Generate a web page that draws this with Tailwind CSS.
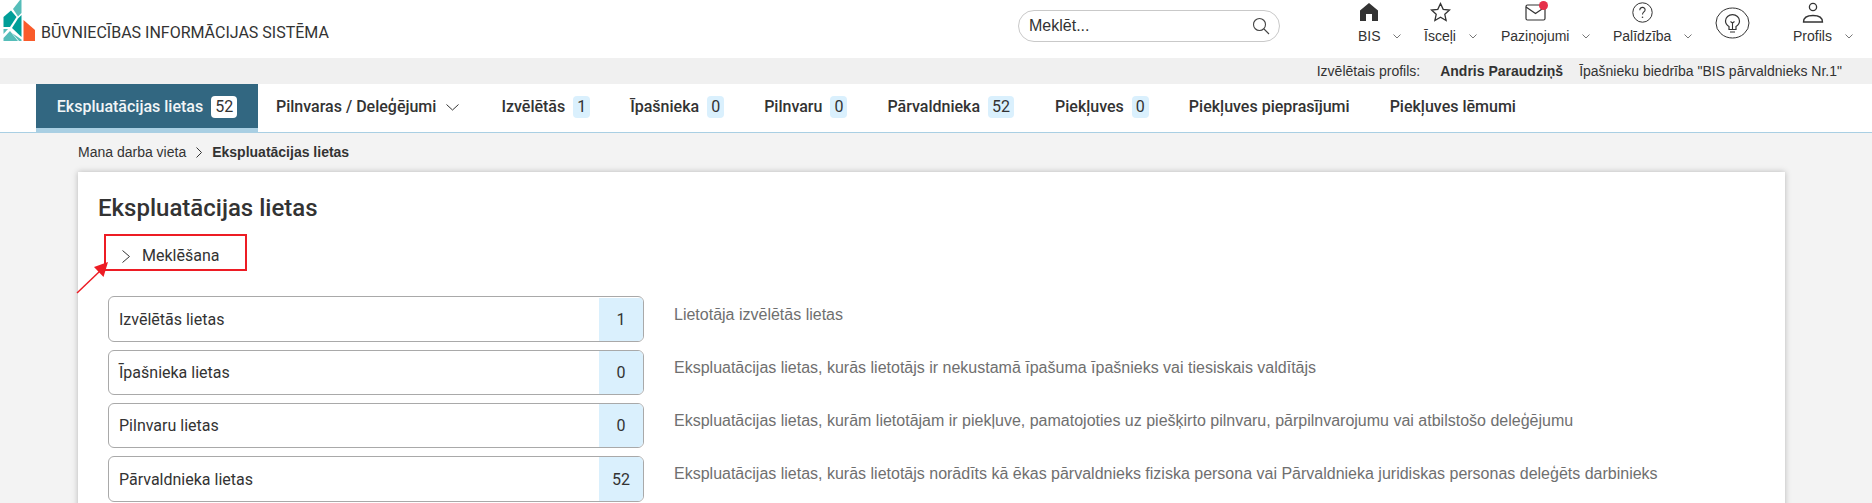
<!DOCTYPE html>
<html lang="lv">
<head>
<meta charset="utf-8">
<script src="https://cdn.jsdelivr.net/npm/@tailwindcss/browser@4"></script>
</head>
<body class="h-[503px] overflow-hidden bg-[#f3f3f3] font-['Roboto',sans-serif] text-[#333]">
<header class="h-[58px] bg-white flex relative">
  <div class="w-[1018px] flex items-start shrink-0">
    <svg class="w-[36px] h-[42px] shrink-0" viewBox="0 0 36 42">
      <path d="M13 9 20 0h1.500v13L18 16.500z" fill="#55bdb9"/>
      <path d="M11 10.500 16.500 17 10 27H3.500V17z" fill="#009e98"/>
      <path d="M18 18.500l3.500-3.500v22L12 28z" fill="#009e98"/>
      <path d="M3.500 29H8l-4.500 5z" fill="#55bdb9"/>
      <path d="M3.500 38l6.500-7 8 10H3.500z" fill="#55bdb9"/>
      <path d="M12 33l9.500 6.500V41H19z" fill="#55bdb9"/>
      <path d="M23.500 20 35 30v11H23.500z" fill="#f95b2b"/>
    </svg>
    <span class="ml-[5px] mt-[23px] text-[16px] leading-5 text-[#333] font-normal whitespace-nowrap">BŪVNIECĪBAS INFORMĀCIJAS SISTĒMA</span>
  </div>
  <div class="w-[262px] h-[32px] mt-[10px] border border-[#c9c9c9] rounded-2xl flex items-center justify-between pl-[10px] pr-[9px] font-['Liberation_Sans',sans-serif] text-[16px] text-[#333] shrink-0">
    <span>Meklēt...</span>
    <svg class="w-[18px] h-[18px]" viewBox="0 0 18 18" fill="none" stroke="#444" stroke-width="1.100"><circle cx="7.500" cy="7.500" r="6"/><path d="M12 12l5 5"/></svg>
  </div>
  <nav class="font-['Liberation_Sans',sans-serif] text-[14px] text-[#333] relative flex-1">
    <div class="absolute left-[78px] top-0 h-[58px]">
      <svg class="absolute left-[1px] top-[2px] w-[20px] h-[20px]" viewBox="0 0 20 20"><path d="M1 19V8.500L10 1l9 7.500V19h-6v-7H7v7z" fill="#333"/></svg>
      <span class="absolute left-0 top-[26px] whitespace-nowrap">BIS</span>
      <svg class="absolute left-[35px] top-[34px] w-[8px] h-[5px]" viewBox="0 0 8 5" fill="none" stroke="#777"><path d="M.5.5 4 4 7.500.5"/></svg>
    </div>
    <div class="absolute left-[144px] top-0 h-[58px]">
      <svg class="absolute left-[6px] top-[2px] w-[21px] h-[20px]" viewBox="0 0 21 20" fill="none" stroke="#333" stroke-width="1.300"><path d="M10.500 1.500l2.700 5.800 6.300.7-4.700 4.300 1.300 6.200-5.600-3.200-5.600 3.200 1.300-6.200L1.500 8l6.300-.7z"/></svg>
      <span class="absolute left-0 top-[26px] whitespace-nowrap">Īsceļi</span>
      <svg class="absolute left-[45px] top-[34px] w-[8px] h-[5px]" viewBox="0 0 8 5" fill="none" stroke="#777"><path d="M.5.5 4 4 7.500.5"/></svg>
    </div>
    <div class="absolute left-[221px] top-0 h-[58px]">
      <svg class="absolute left-[24px] top-[1px] w-[24px] h-[20px]" viewBox="0 0 24 20" fill="none" stroke="#333" stroke-width="1.200"><rect x="1" y="4" width="19" height="15" rx="1.500"/><path d="M1 6l9.500 6.500L20 6"/><circle cx="18.500" cy="4.500" r="4.500" fill="#e6304a" stroke="none"/></svg>
      <span class="absolute left-0 top-[26px] whitespace-nowrap">Paziņojumi</span>
      <svg class="absolute left-[81px] top-[34px] w-[8px] h-[5px]" viewBox="0 0 8 5" fill="none" stroke="#777"><path d="M.5.5 4 4 7.500.5"/></svg>
    </div>
    <div class="absolute left-[333px] top-0 h-[58px]">
      <svg class="absolute left-[19px] top-[2px] w-[21px] h-[21px]" viewBox="0 0 21 21" fill="none" stroke="#333"><circle cx="10.500" cy="10.500" r="9.700"/><path d="M7.800 8.200c0-4 5.600-3.500 5.300-.2-.2 2-2.600 2-2.600 4.500" stroke-width="1.100"/><circle cx="10.500" cy="15.200" r=".8" fill="#333" stroke="none"/></svg>
      <span class="absolute left-0 top-[26px] whitespace-nowrap">Palīdzība</span>
      <svg class="absolute left-[71px] top-[34px] w-[8px] h-[5px]" viewBox="0 0 8 5" fill="none" stroke="#777"><path d="M.5.5 4 4 7.500.5"/></svg>
    </div>
    <svg class="absolute left-[435px] top-[7px] w-[35px] h-[32px]" viewBox="0 0 35 32" fill="none" stroke="#333"><ellipse cx="17.500" cy="16" rx="16.500" ry="15"/><path d="M14 22.500v-3c-2-1.200-3.500-3-3.500-5.500 0-3.800 3.200-6.300 7-6.300s7 2.500 7 6.300c0 2.500-1.500 4.300-3.500 5.500v3z" stroke-width="1.200"/><path d="M15 25h5M17.500 22v-6l-2-1.500M17.500 16l2-1.500" stroke-width="1.100"/></svg>
    <div class="absolute left-[513px] top-0 h-[58px]">
      <svg class="absolute left-[9px] top-[2px] w-[22px] h-[21px]" viewBox="0 0 22 21" fill="none" stroke="#333" stroke-width="1.300"><circle cx="11" cy="5" r="3.600"/><path d="M1.500 20c0-4 3-6.500 9.500-6.500S20.500 16 20.500 20z"/></svg>
      <span class="absolute left-0 top-[26px] whitespace-nowrap">Profils</span>
      <svg class="absolute left-[52px] top-[34px] w-[8px] h-[5px]" viewBox="0 0 8 5" fill="none" stroke="#777"><path d="M.5.5 4 4 7.500.5"/></svg>
    </div>
  </nav>
</header>

<div class="h-[26px] bg-[#f0f0f0] flex items-center justify-end pr-[30px] font-['Liberation_Sans',sans-serif] text-[14px] text-[#333]">
  <span>Izvēlētais profils:</span>
  <span class="ml-[20px] font-bold">Andris Paraudziņš</span>
  <span class="ml-[16px]">Īpašnieku biedrība "BIS pārvaldnieks Nr.1"</span>
</div>

<nav class="h-[49px] bg-white border-b border-[#a9cfe3] flex items-start pl-[36px] text-[16px] font-medium text-[#333] whitespace-nowrap">
  <div class="w-[222px] h-[48px] pt-[2px] bg-[#326781] border-b-4 border-[#a9cfe3] flex items-center justify-center gap-[8px] text-[#f1f5f7]">
    <span>Ekspluatācijas lietas</span>
    <span class="h-[22px] w-[26px] bg-white rounded text-[#333] font-normal flex items-center justify-center">52</span>
  </div>
  <div class="h-[46px] ml-[18px] flex items-center"><span>Pilnvaras / Deleģējumi</span>
    <svg class="ml-[10px] w-[13px] h-[7px]" viewBox="0 0 13 7" fill="none" stroke="#333"><path d="M.5.5l6 5.500 6-5.500"/></svg></div>
  <div class="h-[46px] ml-[42px] flex items-center gap-[8px]"><span>Izvēlētās</span><span class="h-[22px] w-[17px] bg-[#daf0fd] rounded font-normal flex items-center justify-center">1</span></div>
  <div class="h-[46px] ml-[40px] flex items-center gap-[8px]"><span>Īpašnieka</span><span class="h-[22px] w-[17px] bg-[#daf0fd] rounded font-normal flex items-center justify-center">0</span></div>
  <div class="h-[46px] ml-[40px] flex items-center gap-[8px]"><span>Pilnvaru</span><span class="h-[22px] w-[17px] bg-[#daf0fd] rounded font-normal flex items-center justify-center">0</span></div>
  <div class="h-[46px] ml-[40px] flex items-center gap-[8px]"><span>Pārvaldnieka</span><span class="h-[22px] w-[26px] bg-[#daf0fd] rounded font-normal flex items-center justify-center">52</span></div>
  <div class="h-[46px] ml-[41px] flex items-center gap-[8px]"><span>Piekļuves</span><span class="h-[22px] w-[17px] bg-[#daf0fd] rounded font-normal flex items-center justify-center">0</span></div>
  <div class="h-[46px] ml-[40px] flex items-center"><span>Piekļuves pieprasījumi</span></div>
  <div class="h-[46px] ml-[40px] flex items-center"><span>Piekļuves lēmumi</span></div>
</nav>

<div class="h-[39px] pl-[78px] flex items-center font-['Liberation_Sans',sans-serif] text-[14px] text-[#333]">
  <span>Mana darba vieta</span>
  <svg class="mx-[10px] w-[6px] h-[11px]" viewBox="0 0 6 11" fill="none" stroke="#333"><path d="M.5.5l5 5-5 5"/></svg>
  <span class="font-bold">Ekspluatācijas lietas</span>
</div>

<main class="relative ml-[78px] w-[1707px] h-[340px] bg-white shadow-[0_0_6px_rgba(0,0,0,0.25)] pl-[20px] pt-[20px]">
  <h1 class="text-[24px] leading-[32px] font-medium text-[#333]">Ekspluatācijas lietas</h1>
  <div class="mt-[20px] ml-[24px] h-[24px] flex items-center text-[16px] text-[#333]">
    <svg class="w-[8px] h-[13px]" viewBox="0 0 8 13" fill="none" stroke="#333"><path d="M.5.5l7 6-7 6"/></svg>
    <span class="ml-[12px]">Meklēšana</span>
  </div>
  <div class="mt-[28px] ml-[10px] flex flex-col gap-[8px]">
    <div class="flex items-start">
      <div class="w-[536px] h-[46px] pt-[1px] border border-[#a9a9a9] rounded-md overflow-hidden flex items-stretch text-[16px] shrink-0"><span class="flex-1 pl-[10px] flex items-center">Izvēlētās lietas</span><span class="w-[44px] bg-[#daf0fd] flex items-center justify-center">1</span></div>
      <p class="ml-[30px] mt-[7px] font-['Liberation_Sans',sans-serif] text-[16px] leading-6 text-[#6f6f6f]">Lietotāja izvēlētās lietas</p>
    </div>
    <div class="flex items-start">
      <div class="w-[536px] h-[45px] border border-[#a9a9a9] rounded-md overflow-hidden flex items-stretch text-[16px] shrink-0"><span class="flex-1 pl-[10px] pt-[1px] flex items-center">Īpašnieka lietas</span><span class="w-[44px] pt-[1px] bg-[#daf0fd] flex items-center justify-center">0</span></div>
      <p class="ml-[30px] mt-[6px] font-['Liberation_Sans',sans-serif] text-[16px] leading-6 text-[#6f6f6f]">Ekspluatācijas lietas, kurās lietotājs ir nekustamā īpašuma īpašnieks vai tiesiskais valdītājs</p>
    </div>
    <div class="flex items-start">
      <div class="w-[536px] h-[45px] border border-[#a9a9a9] rounded-md overflow-hidden flex items-stretch text-[16px] shrink-0"><span class="flex-1 pl-[10px] pt-[1px] flex items-center">Pilnvaru lietas</span><span class="w-[44px] pt-[1px] bg-[#daf0fd] flex items-center justify-center">0</span></div>
      <p class="ml-[30px] mt-[6px] font-['Liberation_Sans',sans-serif] text-[16px] leading-6 text-[#6f6f6f]">Ekspluatācijas lietas, kurām lietotājam ir piekļuve, pamatojoties uz piešķirto pilnvaru, pārpilnvarojumu vai atbilstošo deleģējumu</p>
    </div>
    <div class="flex items-start">
      <div class="w-[536px] h-[46px] border border-[#a9a9a9] rounded-md overflow-hidden flex items-stretch text-[16px] shrink-0"><span class="flex-1 pl-[10px] pt-[1px] flex items-center">Pārvaldnieka lietas</span><span class="w-[44px] pt-[1px] bg-[#daf0fd] flex items-center justify-center">52</span></div>
      <p class="ml-[30px] mt-[6px] font-['Liberation_Sans',sans-serif] text-[16px] leading-6 text-[#6f6f6f]">Ekspluatācijas lietas, kurās lietotājs norādīts kā ēkas pārvaldnieks fiziska persona vai Pārvaldnieka juridiskas personas deleģēts darbinieks</p>
    </div>
  </div>
  <div class="absolute left-[26px] top-[62px] w-[143px] h-[37px] border-2 border-[#ed1c24]"></div>
  <svg class="absolute left-[-2px] top-[88px] w-[34px] h-[34px]" viewBox="0 0 34 34"><path d="M1 33 24 11" stroke="#ed1c24" stroke-width="1.500" fill="none"/><path d="M32 2 18 7l9.500 10z" fill="#ed1c24"/></svg>
</main>
</body>
</html>
